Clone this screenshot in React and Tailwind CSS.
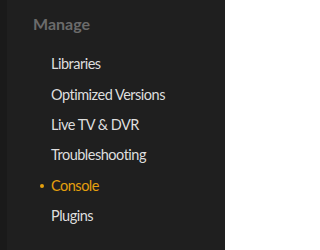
export default function App() {
  const items = ["Libraries", "Optimized Versions", "Live TV & DVR", "Troubleshooting", "Console", "Plugins"];
  return (
    <div className="flex h-[250px] w-[225px] bg-[#1f1f1f]" style={{ fontFamily: 'Lato, sans-serif' }}>
      <div className="w-[7px] bg-[#1a1a1a]" />
      <div className="flex flex-col pl-[26px] pt-[13px]">
        <div className="text-[16px] font-bold leading-[22px] text-[#6b6b6b]">Manage</div>
        <ul className="mt-[14px] flex flex-col">
          {items.map((t) => {
            const active = t === "Console";
            return (
              <li key={t} className={`relative flex h-[30.4px] items-center pl-[18px] text-[14.5px] tracking-[-0.5px] ${active ? "text-[#e5a00d]" : "text-[#dedede]"}`}>
                {active && <span className="absolute left-[7px] top-1/2 h-[4px] w-[4px] -translate-y-1/2 rounded-full bg-[#e5a00d]" />}
                {t}
              </li>
            );
          })}
        </ul>
      </div>
    </div>
  );
}
